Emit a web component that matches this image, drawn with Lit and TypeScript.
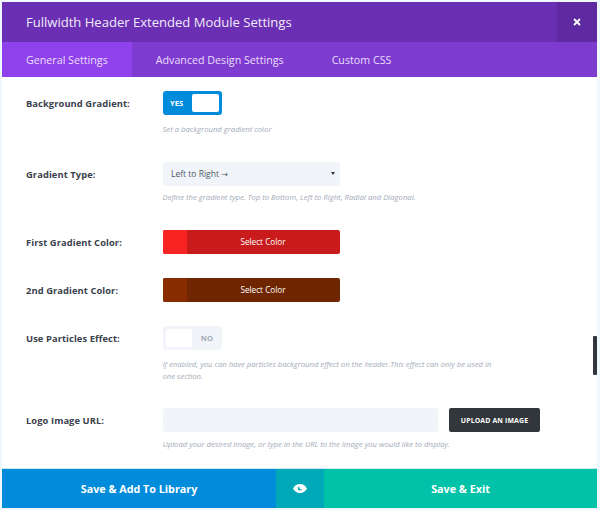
import { LitElement, html, css } from "lit";
import { customElement } from "lit/decorators.js";

@customElement("app-root")
export class AppRoot extends LitElement {
  static styles = css`
    :host { display: block; width: 600px; height: 510px; box-sizing: border-box; padding: 2px 3px 2px 2px; background: #eef8fd; font-family: "Open Sans", sans-serif; overflow: hidden; }
    .modal { height: 506px; display: flex; flex-direction: column; background: #fff; position: relative; overflow: hidden; }
    .head { height: 40px; flex: none; display: flex; align-items: center; background: #6b2fb3; color: #fff; }
    .title { flex: 1; padding-left: 24px; font-size: 13.05px; font-weight: 500; color: #f1ebfa; }
    .close { width: 40px; height: 40px; display: flex; align-items: center; justify-content: center; background: #5f2aa1; }
    .tabs { height: 35px; flex: none; display: flex; background: #7e3bd0; }
    .tab { display: flex; align-items: center; padding: 0 24px; font-size: 10.7px; color: #eadffa; font-weight: 500; }
    .tab.on { background: #8f42ec; }
    .body { flex: 1; min-height: 0; padding-left: 24px; display: flex; flex-direction: column; overflow: hidden; }
    .row { display: grid; grid-template-columns: 136.5px 1fr; flex: none; }
    .label { font-size: 9.35px; font-weight: 700; color: #3a414c; display: flex; align-items: center; height: 24px; letter-spacing: 0.08px; }
    .label.low { height: 25px; }
    .desc { font-size: 7.7px; font-style: italic; color: #a3abb8; line-height: 12px; margin-top: 6px; width: 340px; }
    .toggle + .desc { margin-top: 8px; }
    .select + .desc { margin-top: 5.5px; }
    .r1 { margin-top: 14px; height: 71px; }
    .r2 { height: 68px; }
    .r3 { height: 48px; }
    .r4 { height: 48px; }
    .r5 { height: 82px; }
    .toggle { width: 59px; height: 24px; border-radius: 3px; box-sizing: border-box; padding: 3px; display: flex; align-items: center; font-size: 7.6px; font-weight: 700; }
    .toggle.yes { background: #008bdb; color: #fff; justify-content: space-between; padding-left: 7.5px; }
    .toggle.no { background: #f1f5f9; color: #a3abb8; justify-content: space-between; padding-right: 8.5px; }
    .knob { width: 26.5px; height: 18px; background: #fff; border-radius: 2px; }
    .select { width: 177px; height: 23.5px; box-sizing: border-box; background: #f1f5f9; border-radius: 3px; padding: 0 5px 0 8.5px; display: flex; align-items: center; justify-content: space-between; font-size: 8.5px; color: #4c5866; }
    .arrow { font-family: "DejaVu Sans", sans-serif; font-size: 8px; }
    .caret { width: 0; height: 0; border-left: 2px solid transparent; border-right: 2px solid transparent; border-top: 3px solid #333; }
    .color { width: 177px; height: 23.5px; border-radius: 2px; display: flex; overflow: hidden; color: #fff; font-size: 8.2px; font-weight: 500; }
    .swatch { width: 24px; flex: none; }
    .cname { flex: 1; display: flex; align-items: center; justify-content: center; }
    .red { background: #c91b1b; } .red .swatch { background: #f82323; }
    .brown { background: #6e2500; } .brown .swatch { background: #872d00; }
    .upload-row { display: flex; gap: 11px; }
    .input { width: 275.5px; height: 24px; background: #f1f5f9; border-radius: 3px; }
    .btn { width: 91px; height: 24px; background: #32373c; border-radius: 2px; color: #fff; font-size: 6.9px; font-weight: 700; display: flex; align-items: center; justify-content: center; letter-spacing: 0.15px; }
    .thumb { position: absolute; right: 0; top: 334px; width: 4px; height: 39px; background: #33373d; border-radius: 1px; }
    .foot { height: 39.5px; flex: none; display: flex; color: #fff; font-size: 10.75px; font-weight: 700; border-top: 1px solid #c9e8ef; }
    .foot div { display: flex; align-items: center; justify-content: center; padding-top: 1px; }
    .save { width: 274px; background: #008bdb; }
    .eye { width: 48px; background: #00a8b8; }
    .exit { flex: 1; background: #00c2a8; }
  `;

  render() {
    return html`<div class="modal">
      <div class="head">
        <div class="title">Fullwidth Header Extended Module Settings</div>
        <div class="close"><svg width="8" height="8" viewBox="0 0 8 8"><path d="M1 1 7 7M7 1 1 7" stroke="#fff" stroke-width="1.8"/></svg></div>
      </div>
      <div class="tabs">
        <div class="tab on">General Settings</div>
        <div class="tab">Advanced Design Settings</div>
        <div class="tab">Custom CSS</div>
      </div>
      <div class="body">
        <div class="row r1"><div class="label">Background Gradient:</div><div>
          <div class="toggle yes">YES<span class="knob"></span></div>
          <div class="desc">Set a background gradient color</div></div></div>
        <div class="row r2"><div class="label">Gradient Type:</div><div>
          <div class="select"><span>Left to Right <span class="arrow">→</span></span><span class="caret"></span></div>
          <div class="desc">Define the gradient type. Top to Bottom, Left to Right, Radial and Diagonal.</div></div></div>
        <div class="row r3"><div class="label low">First Gradient Color:</div><div>
          <div class="color red"><span class="swatch"></span><span class="cname">Select Color</span></div></div></div>
        <div class="row r4"><div class="label low">2nd Gradient Color:</div><div>
          <div class="color brown"><span class="swatch"></span><span class="cname">Select Color</span></div></div></div>
        <div class="row r5"><div class="label low">Use Particles Effect:</div><div>
          <div class="toggle no"><span class="knob"></span>NO</div>
          <div class="desc">If enabled, you can have particles background effect on the header.This effect can only be used in one section.</div></div></div>
        <div class="row"><div class="label low">Logo Image URL:</div><div>
          <div class="upload-row"><div class="input"></div><div class="btn">UPLOAD AN IMAGE</div></div>
          <div class="desc">Upload your desired image, or type in the URL to the image you would like to display.</div></div></div>
      </div>
      <div class="thumb"></div>
      <div class="foot">
        <div class="save">Save &amp; Add To Library</div>
        <div class="eye"><svg width="14" height="9" viewBox="0 0 14 9"><path fill="#fff" fill-rule="evenodd" d="M7 0C10.300 0 12.700 2.100 14 4.500 12.700 6.900 10.300 9 7 9S1.300 6.900 0 4.500C1.300 2.100 3.700 0 7 0ZM6.800 2.400A2.100 2.100 0 1 0 9 4.700 1.500 1.500 0 0 1 6.800 2.400Z"/></svg></div>
        <div class="exit">Save &amp; Exit</div>
      </div>
    </div>`;
  }
}
